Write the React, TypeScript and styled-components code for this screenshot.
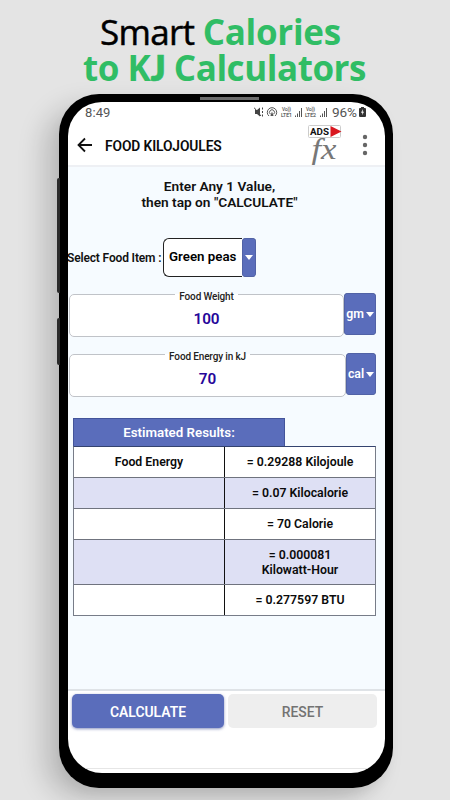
import React from "react";
import styled, { createGlobalStyle } from "styled-components";

const Global = createGlobalStyle`
  * { box-sizing: border-box; }
  body { margin: 0; background: #e4e4e4; font-family: Roboto, "Liberation Sans", sans-serif; }
`;

const Page = styled.main`
  width: 450px;
  height: 800px;
  overflow: hidden;
  display: flex;
  flex-direction: column;
  align-items: center;
  background: #e4e4e4;
`;

const Headline = styled.h1`
  margin: 0;
  height: 94px;
  padding-top: 14px;
  font: 400 35px/36px "Open Sans", "Noto Sans", sans-serif;
  color: #000;
`;

const HeadLine = styled.div<{ $shift: number }>`
  width: 450px;
  height: 36px;
  padding-left: ${(p) => p.$shift}px;
  white-space: nowrap;
  letter-spacing: -0.7px;
  -webkit-text-stroke: 0.5px #000;
`;

const Green = styled.span<{ $gap: number }>`
  color: #30bd65;
  font-weight: 700;
  letter-spacing: ${(p) => p.$gap}px;
  -webkit-text-stroke: 0;
`;

const ShortJ = styled.span`
  font-family: Lato, sans-serif;
  font-weight: 800;
  line-height: 20px;
  -webkit-text-stroke: 0.5px #30bd65;
`;

const Phone = styled.section`
  position: relative;
  width: 334px;
  height: 694px;
  margin-left: 2px;
  flex: none;
  padding: 8px 8px 15px 9px;
  border-radius: 40px;
  background: #000;
  box-shadow: -16px 12px 26px rgba(0, 0, 0, 0.17), -2px 8px 14px -4px rgba(0, 0, 0, 0.08);
`;

const Speaker = styled.div`
  position: absolute;
  top: 3px;
  left: 141px;
  width: 59px;
  height: 3px;
  background: #6b6b6b;
`;

const SideKey = styled.div<{ $top: number; $height: number }>`
  position: absolute;
  left: -2px;
  top: ${(p) => p.$top}px;
  width: 3px;
  height: ${(p) => p.$height}px;
  border-radius: 2px 0 0 2px;
  background: #292929;
`;

const Screen = styled.div`
  height: 671px;
  overflow: hidden;
  display: flex;
  flex-direction: column;
  border-radius: 34px;
  background: #fff;
`;

const StatusBar = styled.div`
  height: 20px;
  padding: 0 19px 0 17px;
  display: flex;
  align-items: center;
  color: #555;
  font-size: 13px;
`;

const Clock = styled.span`
  flex: 1;
  letter-spacing: 0.1px;
`;

const Battery = styled.span`
  width: 27px;
  font-size: 13.6px;
  letter-spacing: -0.1px;
`;

const AppBar = styled.header`
  height: 45px;
  padding: 2px 0 0 9px;
  display: flex;
  align-items: center;
  border-bottom: 2px solid #eef0f4;
`;

const AppTitle = styled.h2`
  flex: 1;
  margin: 2px 0 0 12px;
  font-size: 13.8px;
  font-weight: 600;
  letter-spacing: -0.1px;
  color: #0b0b0b;
`;

const Content = styled.div`
  height: 524px;
  background: #f6fbff;
  border-bottom: 2px solid #dfe3e7;
`;

const Intro = styled.p`
  margin: 0;
  padding: 11px 14px 0 0;
  text-align: center;
  font-size: 13.7px;
  font-weight: 600;
  line-height: 16px;
  color: #111;
`;

const FoodRow = styled.div`
  height: 39px;
  margin-top: 28px;
  display: flex;
  align-items: center;
`;

const FoodLabel = styled.label`
  width: 96px;
  margin-left: -1px;
  white-space: nowrap;
  font-size: 12px;
  font-weight: 600;
  letter-spacing: -0.15px;
  color: #111;
`;

const Picker = styled.div`
  display: flex;
  width: 93px;
  height: 39px;
`;

const PickerValue = styled.div`
  width: 79px;
  padding-left: 5px;
  border: 1px solid #222;
  border-right: 0;
  border-radius: 6px 0 0 6px;
  background: #fff;
  font-size: 13.3px;
  font-weight: 600;
  line-height: 36px;
  white-space: nowrap;
`;

const DropButton = styled.button<{ $width: number; $height: number }>`
  width: ${(p) => p.$width}px;
  height: ${(p) => p.$height}px;
  flex: none;
  margin: 0;
  padding: 0;
  border: 0;
  border-radius: 4px;
  background: #5a6dbb;
  box-shadow: inset 0 0 0 0.5px #485992;
  color: #fff;
  display: flex;
  align-items: center;
  justify-content: center;
  gap: 2px;
  font: 600 12.3px Roboto, sans-serif;
`;

const Caret = styled.span`
  width: 0;
  height: 0;
  border: solid transparent;
  border-width: 5px 4.5px 0;
  border-top-color: #fff;
`;

const FieldRow = styled.div<{ $top: number }>`
  display: flex;
  width: 307px;
  height: 43px;
  margin: ${(p) => p.$top}px 0 0 1px;
`;

const Field = styled.fieldset`
  flex: 1;
  min-width: 0;
  height: 49px;
  margin: -5px 0 0;
  padding: 0;
  border: 1px solid #c0c3c8;
  border-radius: 5px;
  background: #fff;
  text-align: center;
`;

const Legend = styled.legend`
  margin: 0 auto;
  padding: 0 4px;
  height: 12px;
  font-size: 10px;
  font-weight: 500;
  letter-spacing: -0.15px;
  line-height: 17px;
  color: #222;
`;

const FieldValue = styled.div`
  padding-top: 7px;
  font-size: 15.3px;
  font-weight: 600;
  line-height: 24px;
  color: #25069a;
`;

const Results = styled.section`
  width: 303px;
  margin: 22px 0 0 5px;
`;

const ResultsTitle = styled.h3`
  width: 212px;
  height: 28px;
  margin: 0;
  border: 1px solid #43549a;
  border-bottom: 0;
  background: #5a6dbb;
  color: #fff;
  text-align: center;
  font-size: 13.3px;
  font-weight: 600;
  line-height: 27px;
`;

const Grid = styled.div`
  border: 1px solid #777c88;
  border-top-color: #34436f;
  background: #fff;
`;

const Row = styled.div<{ $tall?: boolean; $tint?: boolean }>`
  display: grid;
  grid-template-columns: 150px 1fr;
  height: ${(p) => (p.$tall ? 45 : 31)}px;
  background: ${(p) => (p.$tint ? "#dee0f4" : "#fff")};
  &:first-child { height: 30px; }
  & + & { border-top: 1px solid #6f737e; }
`;

const Cell = styled.div`
  display: flex;
  align-items: center;
  justify-content: center;
  padding-top: 1px;
  text-align: center;
  white-space: pre-line;
  font-size: 12.3px;
  font-weight: 600;
  line-height: 15px;
  color: #0b0b0b;
  & + & { border-left: 1px solid #111; }
`;

const Footer = styled.footer`
  flex: 1;
  display: flex;
  gap: 4px;
  padding: 3px 7px 0 4px;
`;

const Action = styled.button<{ $primary?: boolean }>`
  width: ${(p) => (p.$primary ? 152 : 149)}px;
  height: 34px;
  padding: 1px 0 0;
  border: 0;
  border-radius: 5px;
  background: ${(p) => (p.$primary ? "#5a6dbb" : "#eee")};
  box-shadow: ${(p) => (p.$primary ? "0 1px 3px rgba(60,75,150,.6)" : "none")};
  color: ${(p) => (p.$primary ? "#fff" : "#737373")};
  font: ${(p) => (p.$primary ? 600 : 500)} 13.9px Roboto, sans-serif;
`;

const BottomEdge = styled.div`
  height: 5px;
  flex: none;
  border-top: 1px solid #e6e6e6;
`;

const BackIcon = () => (
  <svg width="16" height="16" viewBox="0 0 16 16" fill="none" stroke="#111" strokeWidth="1.8">
    <path d="M15 8H2M8 1.5 1.5 8 8 14.5" />
  </svg>
);

const StatusIcons = () => (
  <svg width="78" height="12" viewBox="0 0 78 12" fill="none" stroke="#555" strokeWidth="1">
    <path d="M1 4h2l3-2.5v9L3 8H1z" fill="#444" stroke="none" />
    <path d="M0 1.5 7 10M8.5 1.5v2M8.5 5v2M8.5 8.5v2" stroke="#444" />
    <path d="M15 10a4.7 4.7 0 1 1 6 0M16.4 8.2a2.5 2.5 0 1 1 3.2 0" />
    <path d="M18 5.5 19.6 10h-3.2z" fill="#555" stroke="none" />
    <g fill="#555" stroke="#555" strokeWidth=".15" fontFamily="Roboto, sans-serif" fontSize="5.4">
      <text x="28" y="5.3" textLength="9" lengthAdjust="spacingAndGlyphs">Vo))</text>
      <text x="27" y="10.8" textLength="11" lengthAdjust="spacingAndGlyphs">LTE1</text>
      <text x="52" y="5.3" textLength="9" lengthAdjust="spacingAndGlyphs">Vo))</text>
      <text x="51" y="10.8" textLength="11" lengthAdjust="spacingAndGlyphs">LTE2</text>
    </g>
    <path d="M41.5 11V9.5M43.5 11V7.5M45.5 11V5M47.5 11V2M66.5 11V9.5M68.5 11V7.5M70.5 11V5M72.5 11V2" />
  </svg>
);

const BatteryIcon = () => (
  <svg width="7" height="10" viewBox="0 0 7 10">
    <path d="M2 0h3v1h1q1 0 1 1v7q0 1-1 1H1Q0 10 0 9V2q0-1 1-1h1z" fill="#333" />
    <path d="M4 2 2 5.7h1.4L3 8.2l2-3.4H3.7z" fill="#fff" />
  </svg>
);

const FormulaIcon = () => (
  <svg width="36" height="42" viewBox="0 0 36 42" fill="none">
    <rect x=".5" y="1.5" width="32" height="12" rx="1" fill="#fff" stroke="#ccc" />
    <text x="2" y="11.2" fill="#111" fontFamily="Roboto, sans-serif" fontWeight="700" fontSize="9.5" textLength="19" lengthAdjust="spacingAndGlyphs">ADS</text>
    <path d="m22.5 2 11 5.5-11 5.5z" fill="#d91820" />
    <text x="3.5" y="35" fill="#777" fontFamily="Liberation Serif, serif" fontStyle="italic" fontSize="30" textLength="25" lengthAdjust="spacingAndGlyphs">fx</text>
  </svg>
);

const MoreIcon = () => (
  <svg width="41" height="22" viewBox="0 0 41 22" fill="#666">
    <circle cx="21" cy="3" r="2.2" /><circle cx="21" cy="11" r="2.2" /><circle cx="21" cy="19" r="2.2" />
  </svg>
);

const fields = [
  { label: "Food Weight", value: "100", unit: "gm", top: 16, width: 32 },
  { label: "Food Energy in kJ", value: "70", unit: "cal", top: 17, width: 30 },
];

const results = [
  { name: "Food Energy", value: "= 0.29288 Kilojoule" },
  { name: "", value: "= 0.07 Kilocalorie" },
  { name: "", value: "= 70 Calorie" },
  { name: "", value: "= 0.000081\nKilowatt-Hour", tall: true },
  { name: "", value: "= 0.277597 BTU" },
];

export default function App() {
  return (
    <Page>
      <Global />
      <Headline>
        <HeadLine $shift={100}>Smart <Green $gap={-0.3}>Calories</Green></HeadLine>
        <HeadLine $shift={83}><Green $gap={-0.45}>to K<ShortJ>J</ShortJ> Calculators</Green></HeadLine>
      </Headline>
      <Phone>
        <Speaker />
        <SideKey $top={84} $height={115} />
        <SideKey $top={224} $height={47} />
        <Screen>
          <StatusBar>
            <Clock>8:49</Clock>
            <StatusIcons />
            <Battery>96%</Battery>
            <BatteryIcon />
          </StatusBar>
          <AppBar>
            <BackIcon />
            <AppTitle>FOOD KILOJOULES</AppTitle>
            <FormulaIcon />
            <MoreIcon />
          </AppBar>
          <Content>
            <Intro>Enter Any 1 Value,<br />then tap on "CALCULATE"</Intro>
            <FoodRow>
              <FoodLabel>Select Food Item :</FoodLabel>
              <Picker>
                <PickerValue>Green peas</PickerValue>
                <DropButton $width={14} $height={39}><Caret /></DropButton>
              </Picker>
            </FoodRow>
            {fields.map((f) => (
              <FieldRow key={f.label} $top={f.top}>
                <Field>
                  <Legend>{f.label}</Legend>
                  <FieldValue>{f.value}</FieldValue>
                </Field>
                <DropButton $width={f.width} $height={42}>{f.unit}<Caret /></DropButton>
              </FieldRow>
            ))}
            <Results>
              <ResultsTitle>Estimated Results:</ResultsTitle>
              <Grid>
                {results.map((r, i) => (
                  <Row key={r.value} $tall={r.tall} $tint={i % 2 === 1}>
                    <Cell>{r.name}</Cell>
                    <Cell>{r.value}</Cell>
                  </Row>
                ))}
              </Grid>
            </Results>
          </Content>
          <Footer>
            <Action $primary>CALCULATE</Action>
            <Action>RESET</Action>
          </Footer>
          <BottomEdge />
        </Screen>
      </Phone>
    </Page>
  );
}
